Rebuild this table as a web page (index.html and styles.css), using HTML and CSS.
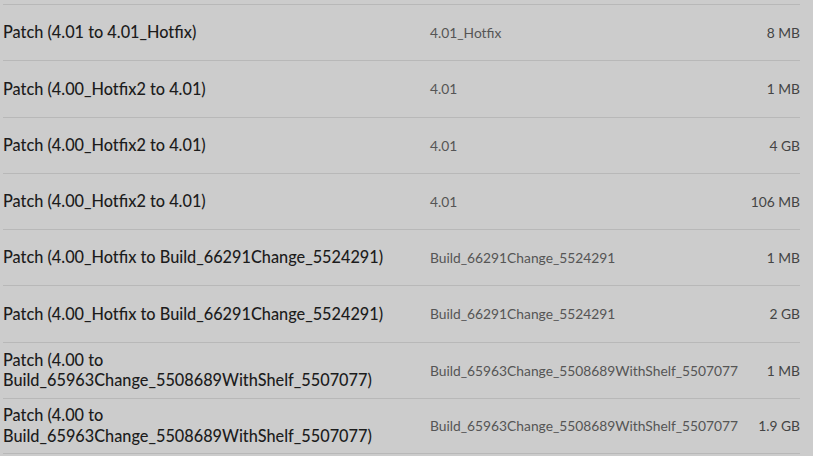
FILE: index.html
```html
<!DOCTYPE html>
<html>
<head>
<meta charset="utf-8">
<link rel="stylesheet" href="styles.css">
</head>
<body>
<div class="list">
  <div class="row"><div class="name">Patch (4.01 to 4.01_Hotfix)</div><div class="ver">4.01_Hotfix</div><div class="size">8 MB</div></div>
  <div class="row"><div class="name">Patch (4.00_Hotfix2 to 4.01)</div><div class="ver">4.01</div><div class="size">1 MB</div></div>
  <div class="row"><div class="name">Patch (4.00_Hotfix2 to 4.01)</div><div class="ver">4.01</div><div class="size">4 GB</div></div>
  <div class="row"><div class="name">Patch (4.00_Hotfix2 to 4.01)</div><div class="ver">4.01</div><div class="size">106 MB</div></div>
  <div class="row"><div class="name">Patch (4.00_Hotfix to Build_66291Change_5524291)</div><div class="ver">Build_66291Change_5524291</div><div class="size">1 MB</div></div>
  <div class="row"><div class="name">Patch (4.00_Hotfix to Build_66291Change_5524291)</div><div class="ver">Build_66291Change_5524291</div><div class="size">2 GB</div></div>
  <div class="row"><div class="name">Patch (4.00 to Build_65963Change_5508689WithShelf_5507077)</div><div class="ver">Build_65963Change_5508689WithShelf_5507077</div><div class="size">1 MB</div></div>
  <div class="row"><div class="name">Patch (4.00 to Build_65963Change_5508689WithShelf_5507077)</div><div class="ver">Build_65963Change_5508689WithShelf_5507077</div><div class="size">1.9 GB</div></div>
</div>
</body>
</html>
```
FILE: styles.css
```css
html, body {
  margin: 0;
  background: #cccccc;
  font-family: Lato, "Open Sans", sans-serif;
}
.list {
  width: 797px;
  margin-left: 3px;
  padding-top: 4px;
}
.row {
  display: grid;
  grid-template-columns: 427px 1fr auto;
  align-items: center;
  height: 56.25px;
  box-sizing: border-box;
  border-top: 1px solid #b8b8b8;
}
.row:last-child {
  border-bottom: 1px solid #b8b8b8;
}
.name {
  font-size: 16.3px;
  font-weight: 500;
  line-height: 20.5px;
  color: #1c1c1c;
  padding-right: 40px;
}
.ver {
  font-size: 13.8px;
  color: #555555;
  white-space: nowrap;
}
.size {
  font-size: 13.8px;
  color: #444444;
  text-align: right;
  padding-left: 16px;
  white-space: nowrap;
}
```
